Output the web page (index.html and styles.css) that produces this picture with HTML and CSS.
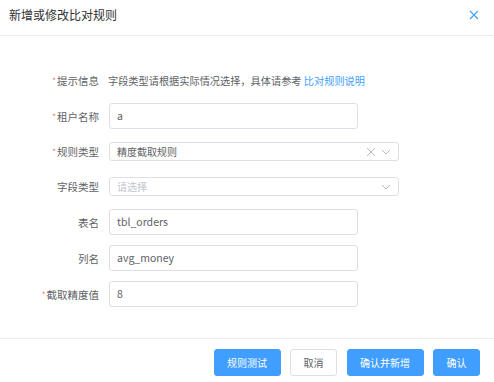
FILE: index.html
```html
<!DOCTYPE html>
<html lang="zh-CN">
<head>
<meta charset="utf-8">
<link rel="stylesheet" href="styles.css">
</head>
<body>
<div class="dialog">
  <div class="header">
    <span class="title">新增或修改比对规则</span>
    <svg class="close" width="10" height="10" viewBox="0 0 10 10"><path d="M1 1L9 9M9 1L1 9" stroke="#409eff" stroke-width="1.1" fill="none"/></svg>
  </div>
  <div class="body">
    <div class="row">
      <label class="label"><span class="req">*</span>提示信息</label>
      <div class="hint">字段类型请根据实际情况选择，具体请参考 <a class="link">比对规则说明</a></div>
    </div>
    <div class="row">
      <label class="label"><span class="req">*</span>租户名称</label>
      <div class="input">a</div>
    </div>
    <div class="row row-sel">
      <label class="label"><span class="req">*</span>规则类型</label>
      <div class="select">
        <span class="val">精度截取规则</span>
        <svg class="ico" width="10" height="10" viewBox="0 0 10 10"><path d="M1 1L9 9M9 1L1 9" stroke="#b4b8bf" stroke-width="1" fill="none"/></svg>
        <svg class="ico chev" width="10" height="10" viewBox="0 0 10 10"><path d="M1 3L5 7L9 3" stroke="#b4b8bf" stroke-width="1" fill="none"/></svg>
      </div>
    </div>
    <div class="row row-sel">
      <label class="label">字段类型</label>
      <div class="select">
        <span class="val ph">请选择</span>
        <svg class="ico chev" width="10" height="10" viewBox="0 0 10 10"><path d="M1 3L5 7L9 3" stroke="#b4b8bf" stroke-width="1" fill="none"/></svg>
      </div>
    </div>
    <div class="row">
      <label class="label">表名</label>
      <div class="input">tbl_orders</div>
    </div>
    <div class="row">
      <label class="label">列名</label>
      <div class="input">avg_money</div>
    </div>
    <div class="row">
      <label class="label"><span class="req">*</span>截取精度值</label>
      <div class="input">8</div>
    </div>
  </div>
  <div class="footer">
    <button class="btn primary">规则测试</button>
    <button class="btn">取消</button>
    <button class="btn primary">确认并新增</button>
    <button class="btn primary">确认</button>
  </div>
</div>
</body>
</html>
```
FILE: styles.css
```css
* { box-sizing: border-box; }
html, body { margin: 0; padding: 0; background: #fff; }
body {
  font-family: "Noto Sans CJK SC", "Noto Sans", sans-serif;
  color: #606266;
  width: 494px;
  height: 382px;
  overflow: hidden;
}
.dialog { width: 494px; }
.header {
  height: 36px;
  padding: 8px 14px 0 9px;
  border-bottom: 1px solid #eceef2;
  display: flex;
  justify-content: space-between;
  align-items: flex-start;
}
.title {
  font-size: 12px;
  line-height: 14px;
  color: #303133;
}
.close { margin-top: 2px; margin-right: 1px; }
.body {
  padding: 31px 0 31px 0;
  display: flex;
  flex-direction: column;
  gap: 10px;
}
.row {
  display: flex;
  align-items: center;
  height: 26px;
}
.row-sel { height: 25px; }
.label {
  width: 100px;
  text-align: right;
  padding-right: 1px;
  font-size: 10.5px;
  color: #606266;
  flex-shrink: 0;
}
.req { color: #f56c6c; margin-right: 1px; font-size: 8px; vertical-align: 1px; }
.hint {
  margin-left: 8px;
  font-size: 10.2px;
  color: #606266;
  white-space: nowrap;
}
.link { color: #409eff; }
.input {
  margin-left: 9px;
  width: 249px;
  height: 26px;
  border: 1px solid #dcdfe6;
  border-radius: 3px;
  padding: 0 7px;
  font-size: 10.5px;
  line-height: 24px;
  color: #606266;
}
.select {
  margin-left: 9px;
  width: 290px;
  height: 19px;
  border: 1px solid #dcdfe6;
  border-radius: 3px;
  padding: 0 7px;
  display: flex;
  align-items: center;
  font-size: 10px;
  color: #606266;
}
.val { flex: 1; }
.ph { color: #c0c4cc; }
.ico { flex-shrink: 0; }
.chev { margin-left: 5px; }
.footer {
  border-top: 1px solid #eceef2;
  padding: 10px 14px 0 0;
  display: flex;
  justify-content: flex-end;
  gap: 9.5px;
}
.btn {
  font-family: inherit;
  height: 27px;
  font-size: 10px;
  padding: 0 12.5px;
  border-radius: 3px;
  border: 1px solid #dcdfe6;
  background: #fff;
  color: #606266;
  cursor: pointer;
}
.btn.primary {
  background: #409eff;
  border-color: #409eff;
  color: #fff;
}
```
